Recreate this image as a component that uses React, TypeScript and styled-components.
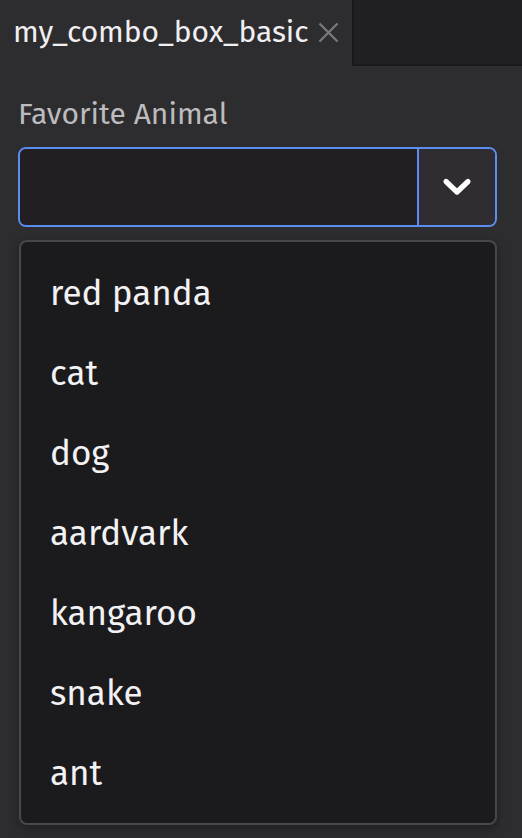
import React from "react";
import styled, { createGlobalStyle } from "styled-components";

const GlobalStyle = createGlobalStyle`
  html, body {
    margin: 0;
    padding: 0;
    background: #2d2c2f;
  }
  body {
    font-family: "Fira Sans", "Open Sans", "Noto Sans", sans-serif;
    -webkit-font-smoothing: antialiased;
  }
`;

const Page = styled.div`
  width: 522px;
  height: 838px;
  background: #2d2c2f;
  display: flex;
  flex-direction: column;
  overflow: hidden;
`;

const TabBar = styled.div`
  display: flex;
  height: 66px;
  flex: none;
`;

const Tab = styled.div`
  display: flex;
  align-items: center;
  gap: 10px;
  padding: 0 10px 2px 13px;
  background: #2d2c2f;
  width: 352px;
  box-sizing: border-box;
`;

const TabTitle = styled.span`
  font-size: 30px;
  color: #f0eff1;
  white-space: nowrap;
  letter-spacing: -0.1px;
`;

const TabFiller = styled.div`
  flex: 1;
  background: #201f22;
  border-left: 2px solid #19181b;
  border-bottom: 2px solid #19181b;
`;

const Content = styled.div`
  display: flex;
  flex-direction: column;
  padding: 0 25px 0 18px;
`;

const Label = styled.div`
  font-size: 30px;
  line-height: 36px;
  color: #bcbbbe;
  margin-top: 30px;
  margin-bottom: 15px;
`;

const Field = styled.div`
  display: flex;
  height: 80px;
  border: 2px solid #5b8cf0;
  border-radius: 8px;
  box-sizing: border-box;
  overflow: hidden;
`;

const Input = styled.div`
  flex: 1;
  background: #211f23;
  border-right: 2px solid #5b8cf0;
`;

const FieldButton = styled.div`
  width: 76px;
  background: #2f2d31;
  display: flex;
  align-items: center;
  justify-content: center;
`;

const Popover = styled.div`
  margin-top: 13px;
  margin-left: 1px;
  background: #1b1a1d;
  border: 2px solid #48474b;
  border-radius: 8px;
  padding: 11px 0 10px;
  box-shadow: 0 3px 10px rgba(0, 0, 0, 0.35);
  display: flex;
  flex-direction: column;
`;

const Item = styled.div`
  height: 80px;
  display: flex;
  align-items: center;
  padding-left: 29px;
  font-size: 35px;
  color: #f2f1f3;
`;

const CloseIcon = () => (
  <svg width="21" height="21" viewBox="0 0 21 21" fill="none">
    <path d="M1.5 1.5 L19.5 19.5 M19.5 1.5 L1.5 19.5" stroke="#78777b" strokeWidth="2.4" />
  </svg>
);

const Chevron = () => (
  <svg width="30" height="20" viewBox="0 0 30 20" fill="none">
    <path d="M4 4.5 L15 15 L26 4.5" stroke="#ffffff" strokeWidth="5.2" strokeLinecap="round" strokeLinejoin="round" />
  </svg>
);

const animals = ["red panda", "cat", "dog", "aardvark", "kangaroo", "snake", "ant"];

export default function App() {
  return (
    <Page>
      <GlobalStyle />
      <TabBar>
        <Tab>
          <TabTitle>my_combo_box_basic</TabTitle>
          <CloseIcon />
        </Tab>
        <TabFiller />
      </TabBar>
      <Content>
        <Label>Favorite Animal</Label>
        <Field>
          <Input />
          <FieldButton>
            <Chevron />
          </FieldButton>
        </Field>
        <Popover>
          {animals.map((a) => (
            <Item key={a}>{a}</Item>
          ))}
        </Popover>
      </Content>
    </Page>
  );
}
